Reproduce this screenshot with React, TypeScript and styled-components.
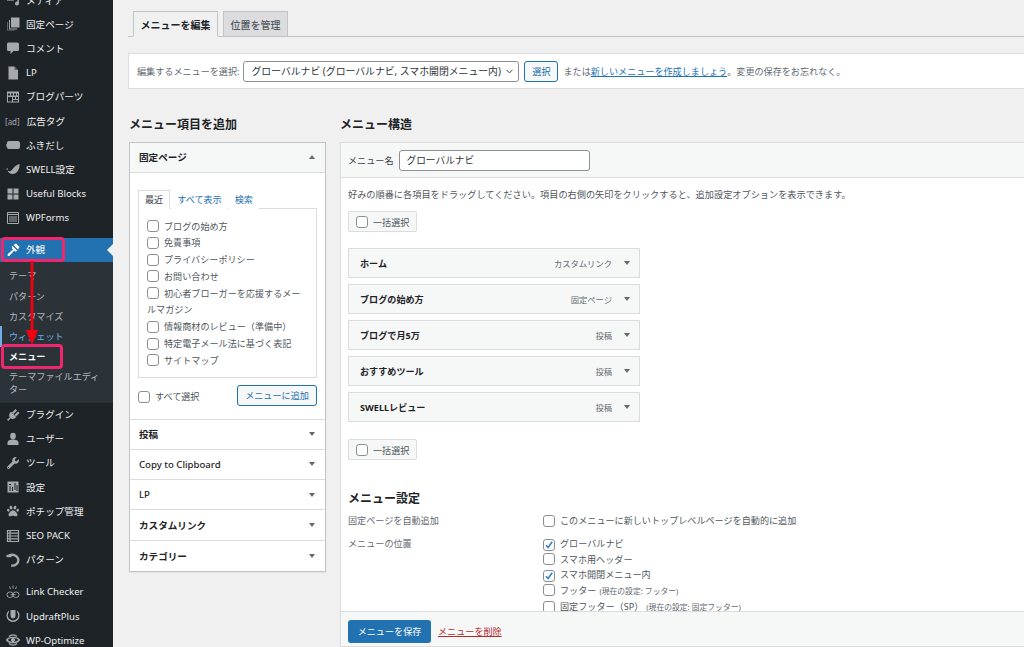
import type { ReactNode } from "react";
import styled, { createGlobalStyle } from "styled-components";
import { ChevronDown } from "lucide-react";
import { FaPaw, FaWrench } from "react-icons/fa";

const FONT = `"Noto Sans", "Noto Sans CJK JP", sans-serif`;

const GlobalStyle = createGlobalStyle`
  html, body {
    margin: 0;
    padding: 0;
    height: 100%;
    overflow: hidden;
    background: #f0f0f1;
  }
  * {
    box-sizing: border-box;
  }
  #root {
    height: 100%;
  }
`;

const Page = styled.div`
  position: relative;
  display: flex;
  width: 1024px;
  height: 647px;
  overflow: hidden;
  font-family: ${FONT};
  font-size: 9.1px;
  color: #3c434a;
`;

/* ---------- sidebar ---------- */

const Sidebar = styled.nav`
  flex: 0 0 113px;
  background: #1d2327;
  padding-top: 0;
  margin-top: -12px;
  height: 659px;
`;

const Item = styled.div<{ $current?: boolean; $gap?: boolean }>`
  position: relative;
  display: flex;
  align-items: center;
  gap: 6px;
  height: ${(p) => (p.$current ? 24 : 24.2)}px;
  margin-top: ${(p) => (p.$gap ? 8 : 0)}px;
  padding-left: 6px;
  font-size: 9.6px;
  line-height: 13px;
  white-space: nowrap;
  color: ${(p) => (p.$current ? "#fff" : "#f0f0f1")};
  background: ${(p) => (p.$current ? "#2271b1" : "transparent")};
  svg {
    color: ${(p) => (p.$current ? "#fff" : "#a7aaad")};
  }
`;

const CurrentArrow = styled.span`
  position: absolute;
  right: 0;
  top: 6px;
  border: 6px solid transparent;
  border-left-width: 0;
  border-right-color: #f0f0f1;
`;

const IconSlot = styled.span`
  flex: 0 0 14px;
  display: flex;
  align-items: center;
  justify-content: center;
  width: 14px;
  height: 14px;
`;

const AdTag = styled.span`
  flex: 0 0 14px;
  margin-left: -1px;
  margin-right: 1px;
  font-size: 8px;
  color: #a7aaad;
`;

const SubMenu = styled.div`
  background: #2c3338;
  padding: 4px 0 2.5px;
`;

const SubItem = styled.div<{ $active?: boolean; $focus?: boolean }>`
  position: relative;
  padding: 3.6px 8px 3.6px 9px;
  font-size: 9.1px;
  line-height: 13px;
  color: ${(p) =>
    p.$active ? "#fff" : p.$focus ? "#72aee6" : "rgba(240, 246, 252, 0.7)"};
  font-weight: ${(p) => (p.$active ? 700 : 400)};
  box-shadow: ${(p) => (p.$focus ? "inset 2px 0 0 #72aee6" : "none")};
`;

/* ---------- annotations laid over the sidebar ---------- */

const Marker = styled.div<{ $top: number; $width: number }>`
  position: absolute;
  left: 1px;
  top: ${(p) => p.$top}px;
  width: ${(p) => p.$width}px;
  height: 25px;
  border: 3px solid #f0276e;
  border-radius: 4px;
`;

const ArrowOverlay = styled.svg`
  position: absolute;
  left: 24px;
  top: 260px;
`;

/* ---------- main area ---------- */

const Main = styled.main`
  flex: 1;
  min-width: 0;
  padding: 11px 0 0 15px;
  overflow: hidden;
`;

const TabBar = styled.div`
  display: flex;
  gap: 5px;
  height: 26px;
  padding-left: 5px;
  border-bottom: 1px solid #c3c4c7;
  margin-right: -10px;
`;

const Tab = styled.div<{ $active?: boolean }>`
  display: flex;
  align-items: center;
  justify-content: center;
  width: ${(p) => (p.$active ? 85 : 65)}px;
  height: ${(p) => (p.$active ? 26 : 25)}px;
  border: 1px solid #c3c4c7;
  border-bottom: ${(p) => (p.$active ? "1px solid #f0f0f1" : "0")};
  background: ${(p) => (p.$active ? "#f0f0f1" : "#dcdcde")};
  font-size: 10px;
  font-weight: ${(p) => (p.$active ? 700 : 500)};
  color: ${(p) => (p.$active ? "#1d2327" : "#50575e")};
`;

const SelectBox = styled.div`
  display: flex;
  align-items: center;
  height: 36px;
  margin: 16px -10px 0 0;
  padding-left: 8px;
  background: #fff;
  border: 1px solid #dcdcde;
  white-space: nowrap;
  color: #646970;
`;

const FakeSelect = styled.div`
  display: flex;
  align-items: center;
  justify-content: space-between;
  width: 276px;
  height: 21px;
  margin: 0 5px 0 4px;
  padding: 0 3px 0 7px;
  background: #fff;
  border: 1px solid #8c8f94;
  border-radius: 3px;
  font-size: 9.85px;
  color: #2c3338;
`;

const SmallButton = styled.div`
  display: flex;
  align-items: center;
  justify-content: center;
  width: 34px;
  height: 21px;
  margin-right: 5px;
  background: #f6f7f7;
  border: 1px solid #2271b1;
  border-radius: 3px;
  color: #2271b1;
`;

const Link = styled.a<{ $danger?: boolean }>`
  color: ${(p) => (p.$danger ? "#b32d2e" : "#2271b1")};
  text-decoration: underline;
`;

const Columns = styled.div`
  display: flex;
  align-items: flex-start;
  gap: 14px;
  margin-left: 1px;
`;

const LeftColumn = styled.section`
  flex: 0 0 197px;
`;

const RightColumn = styled.section`
  flex: 0 0 700px;
`;

const Heading = styled.h2`
  margin: 27px 0 8px;
  height: 18px;
  font-size: 12px;
  line-height: 18px;
  font-weight: 700;
  color: #1d2327;
`;

/* ---------- accordion ---------- */

const Accordion = styled.div`
  background: #fff;
  border: 1px solid #c3c4c7;
  box-shadow: 0 1px 1px rgba(0, 0, 0, 0.04);
`;

const AccordionHead = styled.div<{ $open?: boolean; $plain?: boolean }>`
  display: flex;
  align-items: center;
  justify-content: space-between;
  height: ${(p) => (p.$open ? 29.5 : 30.3)}px;
  padding: 0 10px 0 9px;
  font-size: 9.6px;
  font-weight: ${(p) => (p.$plain ? 500 : 700)};
  color: #1d2327;
  background: ${(p) => (p.$open ? "#f6f7f7" : "#fff")};
  border-bottom: 1px solid #dcdcde;
  &:last-child {
    border-bottom: 0;
  }
`;

const Triangle = styled.span<{ $up?: boolean }>`
  width: 0;
  height: 0;
  border-left: 3.5px solid transparent;
  border-right: 3.5px solid transparent;
  border-top: ${(p) => (p.$up ? "0" : "4.5px solid #646970")};
  border-bottom: ${(p) => (p.$up ? "4.5px solid #646970" : "0")};
`;

const AccordionBody = styled.div`
  padding: 17px 8px 13px;
  border-bottom: 1px solid #dcdcde;
`;

const InnerTabs = styled.div`
  display: flex;
  align-items: flex-end;
  height: 19px;
  margin-bottom: -1px;
`;

const InnerTab = styled.span<{ $active?: boolean }>`
  position: relative;
  display: flex;
  align-items: center;
  justify-content: center;
  height: 19px;
  padding: 0 6px;
  margin-left: ${(p) => (p.$active ? 0 : 1)}px;
  color: ${(p) => (p.$active ? "#3c434a" : "#2271b1")};
  background: #fff;
  border: ${(p) => (p.$active ? "1px solid #dcdcde" : "0")};
  border-bottom-color: #fff;
`;

const CheckList = styled.div`
  height: 170px;
  padding: 10px 8px 8px;
  border: 1px solid #dcdcde;
`;

const CheckRow = styled.label<{ $height?: number }>`
  display: block;
  line-height: ${(p) => p.$height ?? 16.8}px;
  font-size: 9.1px;
  color: #50575e;
`;

const Box = styled.span`
  display: inline-flex;
  align-items: center;
  justify-content: center;
  width: 12px;
  height: 12px;
  margin-right: 5px;
  vertical-align: -2.5px;
  background: #fff;
  border: 1px solid #8c8f94;
  border-radius: 3px;
`;

const AddRow = styled.div`
  display: flex;
  align-items: center;
  justify-content: space-between;
  margin-top: 7px;
  color: #50575e;
`;

const SelectAll = styled.span`
  padding-top: 2px;
`;

const AddButton = styled(SmallButton)`
  width: 80px;
  margin-right: 0;
`;

/* ---------- menu structure ---------- */

const Structure = styled.div`
  height: 505px;
  display: flex;
  flex-direction: column;
  background: #fff;
  border: 1px solid #dcdcde;
`;

const NameRow = styled.div`
  display: flex;
  align-items: center;
  gap: 6px;
  flex: 0 0 35px;
  padding-left: 7px;
  background: #f6f7f7;
  border-bottom: 1px solid #dcdcde;
`;

const NameInput = styled.div`
  display: flex;
  align-items: center;
  width: 191px;
  height: 21px;
  padding-left: 6px;
  background: #fff;
  border: 1px solid #8c8f94;
  border-radius: 3px;
  font-size: 9.7px;
  color: #2c3338;
`;

const StructureBody = styled.div`
  flex: 1;
  min-height: 0;
  padding: 10px 7px 0;
  overflow: hidden;
`;

const Hint = styled.p`
  margin: 0;
  line-height: 13px;
  white-space: nowrap;
  font-size: 9.18px;
  color: #50575e;
`;

const BulkSelect = styled.div<{ $top: number }>`
  display: flex;
  align-items: center;
  width: 69px;
  height: 21px;
  margin-top: ${(p) => p.$top}px;
  padding-left: 7px;
  background: #f6f7f7;
  border: 1px solid #dcdcde;
  border-radius: 2px;
  color: #50575e;
`;

const MenuItems = styled.div`
  display: flex;
  flex-direction: column;
  gap: 6px;
  width: 292px;
  margin-top: 16px;
`;

const MenuItem = styled.div`
  display: flex;
  align-items: center;
  height: 30px;
  padding: 0 9px 0 11px;
  background: #f6f7f7;
  border: 1px solid #dcdcde;
`;

const MenuTitle = styled.span`
  flex: 1;
  font-weight: 700;
  color: #1d2327;
`;

const MenuType = styled.span`
  margin-right: 12px;
  font-size: 8.3px;
  color: #646970;
`;

const SettingsTitle = styled.h3`
  margin: 30px 0 5px;
  height: 18px;
  font-size: 12px;
  line-height: 18px;
  font-weight: 700;
  color: #1d2327;
`;

const SettingRow = styled.div<{ $top?: number }>`
  display: grid;
  grid-template-columns: 195px 1fr;
  margin-top: ${(p) => p.$top ?? 0}px;
`;

const SettingLabel = styled.div`
  line-height: 16px;
  color: #646970;
`;

const Note = styled.span`
  margin-left: 3px;
  font-size: 7.8px;
  color: #646970;
`;

const FooterBar = styled.div`
  flex: 0 0 35px;
  display: flex;
  align-items: center;
  gap: 7px;
  padding: 4px 0 0 7px;
  background: #f6f7f7;
  border-top: 1px solid #dcdcde;
`;

const SaveButton = styled.div`
  display: flex;
  align-items: center;
  justify-content: center;
  width: 83px;
  height: 23px;
  background: #2271b1;
  border-radius: 3px;
  color: #fff;
`;

/* ---------- icons that no package has ---------- */

const Media = () => (
  <svg width="14" height="14" viewBox="0 0 14 14" fill="currentColor">
    <path d="M1 2h7v6H1z" opacity="0.6" />
    <path d="M9 1h4v9.500a2 2 0 1 1-1.500-1.900V4H9z" />
  </svg>
);
const Pages = () => (
  <svg width="14" height="14" viewBox="0 0 14 14" fill="currentColor">
    <path d="M5 .5h8.500v10H5z" />
    <path d="M3 3v9.500h8v-1H4V3z" />
    <path d="M1 5v8.500h7.500v-.6H1.700V5z" opacity="0.7" />
  </svg>
);
const Comment = () => (
  <svg width="14" height="14" viewBox="0 0 14 14" fill="currentColor">
    <path d="M2.500 1.500h9a1.500 1.500 0 0 1 1.500 1.500v5.500a1.500 1.500 0 0 1-1.500 1.500H7.500L4.500 13v-3h-2A1.500 1.500 0 0 1 1 8.500V3a1.500 1.500 0 0 1 1.500-1.500z" />
  </svg>
);
const PageIcon = () => (
  <svg width="14" height="14" viewBox="0 0 14 14" fill="currentColor">
    <path d="M2.500 .5h6l3.500 3.500v9.500h-9.500z" />
    <path d="M8.500 .5V4H12z" fill="#1d2327" opacity="0.5" />
  </svg>
);
const Parts = () => (
  <svg width="14" height="14" viewBox="0 0 14 14" fill="currentColor">
    <path
      fillRule="evenodd"
      d="M1 1.500h12v11H1zM2 3.500v2h2v-2zM5 3.500v2h2v-2zM8 3.500v2h2v-2zM11 3.500v2h1v-2zM2 7v4.500h4V7zM7 7v2h2V7zM10 7v2h2V7zM7 10v1.500h5V10z"
    />
  </svg>
);
const Bubble = () => (
  <svg width="14" height="14" viewBox="0 0 14 14" fill="currentColor">
    <path d="M3 3h9a2 2 0 0 1 2 2v4a2 2 0 0 1-2 2H3a2 2 0 0 1-2-1.500L0 7l1-1.500A2 2 0 0 1 3 3z" />
  </svg>
);
const Swell = () => (
  <svg width="14" height="14" viewBox="0 0 14 14" fill="currentColor">
    <path d="M13.500 2c.5 5-2.500 10-7 10-2.500 0-4-1.500-5-3.500 1.500 1 3 .8 4-.2C7.500 6.500 9 3 13.500 2z" />
    <circle cx="1.200" cy="7" r="0.800" />
  </svg>
);
const Blocks = () => (
  <svg width="14" height="14" viewBox="0 0 14 14" fill="currentColor">
    <path d="M1.500 1.500h5v5h-5zM7.500 1.500h5v5h-5zM1.500 7.500h5v5h-5zM7.500 7.500h5v5h-5z" />
  </svg>
);
const Forms = () => (
  <svg width="14" height="14" viewBox="0 0 14 14" fill="none" stroke="currentColor">
    <path d="M1.500 1.500h11v11h-11z" />
    <path d="M1.500 3.500h11M3 6h8M3 8h8M3 10h8" />
  </svg>
);
const Brush = () => (
  <svg width="14" height="14" viewBox="0 0 14 14" fill="currentColor">
    <path d="M7.500 2L10 .5l3.500 3.500L12 6.500z" />
    <path d="M6.300 2.700l5 5-2 1.100-1-1.400-4.800 5.300a1.100 1.100 0 0 1-1.600-1.600l5.300-4.900-1.400-1z" />
  </svg>
);
const Plug = () => (
  <svg width="14" height="14" viewBox="0 0 14 14" fill="currentColor">
    <path d="M5 3.800l5.200 5.200c-1.500 2-3.900 2.400-5.700 1.200L2.300 13 1 11.700l2.800-2.200C2.700 7.700 3.100 5.300 5 3.800z" />
    <path d="M6 4.500L9.500 1 11 2.500 7.500 6zM8.500 7L12 3.500 13.500 5 10 8.500z" />
  </svg>
);
const User = () => (
  <svg width="14" height="14" viewBox="0 0 14 14" fill="currentColor">
    <ellipse cx="7" cy="4" rx="2.800" ry="3.200" />
    <path d="M1.500 13v-2.200c0-2.300 2.500-3.300 5.500-3.300s5.500 1 5.500 3.300V13z" />
  </svg>
);
const Sliders = () => (
  <svg width="14" height="14" viewBox="0 0 14 14" fill="currentColor">
    <path
      fillRule="evenodd"
      d="M1.500 1.500h11v11h-11zM3.500 6v5h1V6zM3 4v1h2V4zM8.500 3v5h1V3zM8 8.500v1h2v-1zM6 7v4h1V7zM10.500 5v6h1V5z"
    />
  </svg>
);
const SeoPack = () => (
  <svg width="14" height="14" viewBox="0 0 14 14" fill="none" stroke="currentColor" strokeWidth="1.200">
    <path d="M1.500 1.500h11v11h-11zM1.500 4.200h11M1.500 7h11M1.500 9.800h11M4 1.500v11" />
  </svg>
);
const Rotate = () => (
  <svg width="14" height="14" viewBox="0 0 14 14" fill="none" stroke="currentColor" strokeWidth="2.400">
    <path d="M3 2.600c3.200-1.800 8-.6 9.200 3.400.8 4-3 7.400-7 6.500" />
    <path d="M.5 3h5" />
  </svg>
);
const LinkCheck = () => (
  <svg width="14" height="14" viewBox="0 0 14 14" fill="none" stroke="currentColor" strokeWidth="0.900">
    <rect x="1" y="7" width="6" height="5.500" rx="2.700" />
    <rect x="7" y="7" width="6" height="5.500" rx="2.700" />
    <path d="M4.500 9.700h5M7 .5v3M3.500 1.500l1 2.500M10.500 1.500l-1 2.500" />
  </svg>
);
const Updraft = () => (
  <svg width="14" height="14" viewBox="0 0 14 14" fill="currentColor">
    <path d="M3 1.500A6.500 6.500 0 1 0 11 1.500V3a5.200 5.200 0 1 1-8 0z" />
    <path d="M4.500 1h5v6a2.500 2.500 0 0 1-5 0z" />
  </svg>
);
const Optimize = () => (
  <svg width="14" height="14" viewBox="0 0 14 14" fill="none" stroke="currentColor">
    <path d="M3 3.500a6 6 0 0 1 8 0M3 10.500a6 6 0 0 0 8 0" strokeWidth="1.500" />
    <path d="M.5 7c3-3.500 10-3.500 13 0-3 3.500-10 3.500-13 0z" strokeWidth="1.200" />
    <circle cx="7" cy="7" r="1.600" fill="currentColor" />
  </svg>
);
const Tick = () => (
  <svg width="10" height="10" viewBox="0 0 10 10" fill="none" stroke="#3582c4" strokeWidth="1.600">
    <path d="M2 5.200l2.100 2.300L8.200 1.800" />
  </svg>
);

type NavEntry = { icon: ReactNode; label: string; gap?: boolean };

const topItems: NavEntry[] = [
  { icon: <Media />, label: "メディア" },
  { icon: <Pages />, label: "固定ページ" },
  { icon: <Comment />, label: "コメント" },
  { icon: <PageIcon />, label: "LP" },
  { icon: <Parts />, label: "ブログパーツ" },
  { icon: null, label: "広告タグ" },
  { icon: <Bubble />, label: "ふきだし" },
  { icon: <Swell />, label: "SWELL設定" },
  { icon: <Blocks />, label: "Useful Blocks" },
  { icon: <Forms />, label: "WPForms" },
];

const bottomItems: NavEntry[] = [
  { icon: <Plug />, label: "プラグイン" },
  { icon: <User />, label: "ユーザー" },
  { icon: <FaWrench size={12} />, label: "ツール" },
  { icon: <Sliders />, label: "設定" },
  { icon: <FaPaw size={12} />, label: "ポチップ管理" },
  { icon: <SeoPack />, label: "SEO PACK" },
  { icon: <Rotate />, label: "パターン" },
  { icon: <LinkCheck />, label: "Link Checker", gap: true },
  { icon: <Updraft />, label: "UpdraftPlus" },
  { icon: <Optimize />, label: "WP-Optimize" },
];

const NavItem = ({ icon, label, gap }: NavEntry) => (
  <Item $gap={gap}>
    {icon ? <IconSlot>{icon}</IconSlot> : <AdTag>[ad]</AdTag>}
    {label}
  </Item>
);

const pageChecks = [
  "ブログの始め方",
  "免責事項",
  "プライバシーポリシー",
  "お問い合わせ",
  "初心者ブローガーを応援するメールマガジン",
  "情報商材のレビュー（準備中）",
  "特定電子メール法に基づく表記",
  "サイトマップ",
];

const closedPanels = [
  { title: "投稿" },
  { title: "Copy to Clipboard", plain: true },
  { title: "LP", plain: true },
  { title: "カスタムリンク" },
  { title: "カテゴリー" },
];

const menuItems = [
  { title: "ホーム", type: "カスタムリンク" },
  { title: "ブログの始め方", type: "固定ページ" },
  { title: "ブログで月5万", type: "投稿" },
  { title: "おすすめツール", type: "投稿" },
  { title: "SWELLレビュー", type: "投稿" },
];

const locations: { label: string; note?: string; checked?: boolean }[] = [
  { label: "グローバルナビ", checked: true },
  { label: "スマホ用ヘッダー" },
  { label: "スマホ開閉メニュー内", checked: true },
  { label: "フッター", note: "(現在の設定: フッター)" },
  { label: "固定フッター（SP）", note: "(現在の設定: 固定フッター)" },
];

const App = () => {
  return (
    <Page>
      <GlobalStyle />
      <Sidebar>
        {topItems.map((item) => (
          <NavItem key={item.label} {...item} />
        ))}
        <Item $current $gap>
          <IconSlot>
            <Brush />
          </IconSlot>
          外観
          <CurrentArrow />
        </Item>
        <SubMenu>
          <SubItem>テーマ</SubItem>
          <SubItem>パターン</SubItem>
          <SubItem>カスタマイズ</SubItem>
          <SubItem $focus>ウィジェット</SubItem>
          <SubItem $active>メニュー</SubItem>
          <SubItem>テーマファイルエディター</SubItem>
        </SubMenu>
        {bottomItems.map((item) => (
          <NavItem key={item.label} {...item} />
        ))}
      </Sidebar>

      <Main>
        <TabBar>
          <Tab $active>メニューを編集</Tab>
          <Tab>位置を管理</Tab>
        </TabBar>

        <SelectBox>
          編集するメニューを選択:
          <FakeSelect>
            グローバルナビ (グローバルナビ, スマホ開閉メニュー内)
            <ChevronDown size={11} strokeWidth={2} />
          </FakeSelect>
          <SmallButton>選択</SmallButton>
          または<Link>新しいメニューを作成しましょう</Link>。変更の保存をお忘れなく。
        </SelectBox>

        <Columns>
          <LeftColumn>
            <Heading>メニュー項目を追加</Heading>
            <Accordion>
              <AccordionHead $open>
                固定ページ
                <Triangle $up />
              </AccordionHead>
              <AccordionBody>
                <InnerTabs>
                  <InnerTab $active>最近</InnerTab>
                  <InnerTab>すべて表示</InnerTab>
                  <InnerTab>検索</InnerTab>
                </InnerTabs>
                <CheckList>
                  {pageChecks.map((label) => (
                    <CheckRow key={label}>
                      <Box />
                      {label}
                    </CheckRow>
                  ))}
                </CheckList>
                <AddRow>
                  <SelectAll>
                    <Box />
                    すべて選択
                  </SelectAll>
                  <AddButton>メニューに追加</AddButton>
                </AddRow>
              </AccordionBody>
              {closedPanels.map((panel) => (
                <AccordionHead key={panel.title} $plain={panel.plain}>
                  {panel.title}
                  <Triangle />
                </AccordionHead>
              ))}
            </Accordion>
          </LeftColumn>

          <RightColumn>
            <Heading>メニュー構造</Heading>
            <Structure>
              <NameRow>
                メニュー名
                <NameInput>グローバルナビ</NameInput>
              </NameRow>
              <StructureBody>
                <Hint>
                  好みの順番に各項目をドラッグしてください。項目の右側の矢印をクリックすると、追加設定オプションを表示できます。
                </Hint>
                <BulkSelect $top={10}>
                  <Box />
                  一括選択
                </BulkSelect>
                <MenuItems>
                  {menuItems.map((item) => (
                    <MenuItem key={item.title}>
                      <MenuTitle>{item.title}</MenuTitle>
                      <MenuType>{item.type}</MenuType>
                      <Triangle />
                    </MenuItem>
                  ))}
                </MenuItems>
                <BulkSelect $top={17}>
                  <Box />
                  一括選択
                </BulkSelect>
                <SettingsTitle>メニュー設定</SettingsTitle>
                <SettingRow>
                  <SettingLabel>固定ページを自動追加</SettingLabel>
                  <CheckRow $height={16}>
                    <Box />
                    このメニューに新しいトップレベルページを自動的に追加
                  </CheckRow>
                </SettingRow>
                <SettingRow $top={7}>
                  <SettingLabel>メニューの位置</SettingLabel>
                  <div>
                    {locations.map((loc) => (
                      <CheckRow key={loc.label} $height={15.6}>
                        <Box>{loc.checked && <Tick />}</Box>
                        {loc.label}
                        {loc.note && <Note>{loc.note}</Note>}
                      </CheckRow>
                    ))}
                  </div>
                </SettingRow>
              </StructureBody>
              <FooterBar>
                <SaveButton>メニューを保存</SaveButton>
                <Link $danger>メニューを削除</Link>
              </FooterBar>
            </Structure>
          </RightColumn>
        </Columns>
      </Main>

      <Marker $top={237} $width={64} />
      <Marker $top={344} $width={62} />
      <ArrowOverlay width="16" height="90" viewBox="0 0 16 90">
        <path d="M8 1v72" stroke="#f5000f" strokeWidth="2.800" />
        <path d="M2 70h12l-6 15z" fill="#f5000f" />
      </ArrowOverlay>
    </Page>
  );
};

export default App;
